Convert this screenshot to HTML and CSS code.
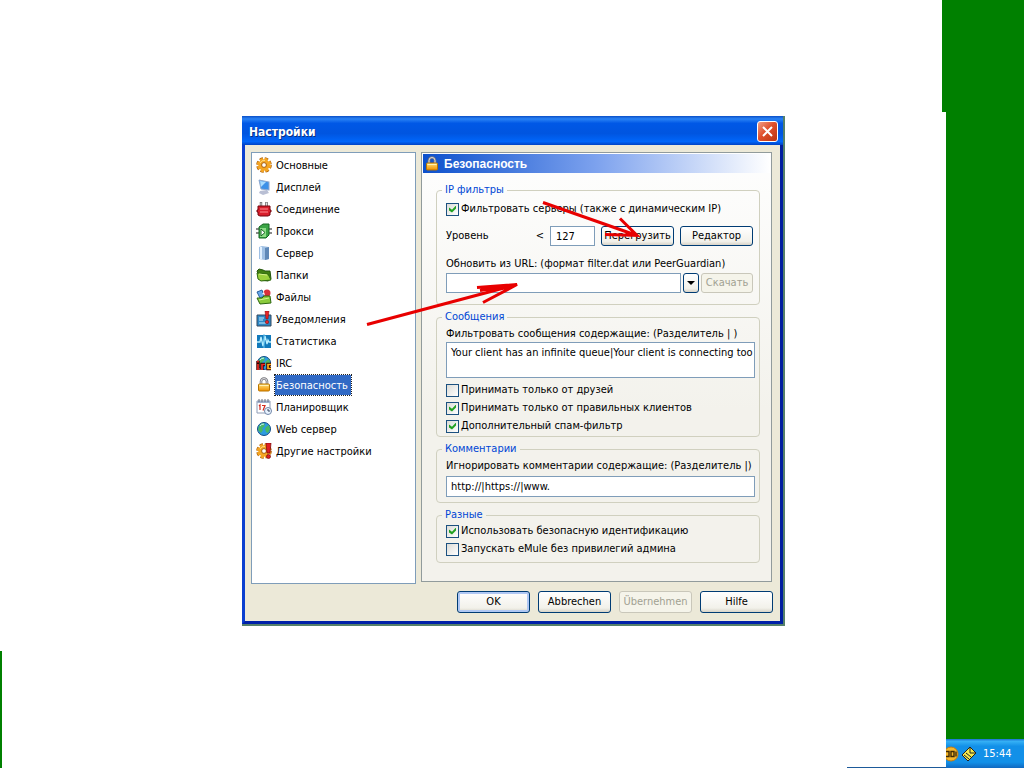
FILE: index.html
```html
<!DOCTYPE html>
<html lang="ru">
  <head>
    <meta charset="UTF-8" />
    <meta name="viewport" content="width=device-width, initial-scale=1.0" />
    <title>Настройки</title>
    <link rel="stylesheet" href="styles.css">
  </head>
  <body>
    <!-- Shared icons -->
    <svg width="0" height="0" class="defs">
      <defs>
        <linearGradient id="gold" x1="0" y1="0" x2="0" y2="1">
          <stop offset="0" stop-color="#ffe27a" />
          <stop offset="1" stop-color="#f09000" />
        </linearGradient>
        <symbol id="lock" viewBox="0 0 16 16">
          <path d="M5 8V4.500a3 3 0 0 1 6 0V8" fill="none" stroke="#77777c" stroke-width="2.600" />
          <path d="M5 8V4.500a3 3 0 0 1 6 0V8" fill="none" stroke="#dedee4" stroke-width="1" />
          <rect x="2.500" y="7" width="11" height="7" rx="1" fill="url(#gold)" stroke="#b87500" />
          <path d="M3.500 8.500h9" stroke="#fff2b5" />
        </symbol>
        <symbol id="gear" viewBox="0 0 16 16">
          <circle cx="8" cy="8" r="6.300" fill="none" stroke="#a85c08" stroke-width="3" stroke-dasharray="3.200 1.750" />
          <circle cx="8" cy="8" r="6" fill="none" stroke="#f5a623" stroke-width="2.400" stroke-dasharray="2.900 1.810" />
          <circle cx="8" cy="8" r="4" fill="none" stroke="#f5a623" stroke-width="3.600" />
          <circle cx="8" cy="8" r="2.400" fill="#fff" stroke="#a85c08" />
          <path d="M4 6a4.500 4.500 0 0 1 5-2.500" fill="none" stroke="#ffdc80" />
        </symbol>
        <symbol id="globe" viewBox="0 0 16 16">
          <circle cx="8" cy="8" r="6.500" fill="#2d9be0" stroke="#124c86" />
          <path d="M3 5l3-3 3 1-1 3-2 1 1 2-2 3-3-3zM10 6l3-2 1 4-2 4-2-1-1-3z" fill="#49b865" />
          <path d="M4 5a5 5 0 0 1 4-2" fill="none" stroke="#c5efff" />
        </symbol>
      </defs>
    </svg>

    <main class="desktop">
      <div class="frame">
        <section class="window">
          <header class="titlebar">
            <h1>Настройки</h1>
            <button type="button" class="close" aria-label="Закрыть">
              <svg viewBox="0 0 19 19"><path d="M5 5l9 9M14 5l-9 9" stroke="#fff" stroke-width="2" /></svg>
            </button>
          </header>

          <div class="content">
            <nav class="menu">
              <a href="#"><svg><use href="#gear" /></svg><span>Основные</span></a>
              <a href="#">
                <svg viewBox="0 0 16 16">
                  <path d="M4 12l7-1 2 3-6 2-4-2z" fill="#b9bfd4" />
                  <path d="M3 1l10 2v8L5 10z" fill="#3d91e8" stroke="#8fa9cf" />
                  <path d="M4 2l6 1-5 5z" fill="#a9dcff" />
                  <path d="M13 3l1-1v9l-1 1z" fill="#c8d2e8" />
                </svg>
                <span>Дисплей</span>
              </a>
              <a href="#">
                <svg viewBox="0 0 16 16">
                  <path d="M5 6V1M10.500 6V1" stroke="#5a5a5a" stroke-width="2.400" />
                  <path d="M5 5V1.500M10.500 5V1.500" stroke="#e2e2e2" />
                  <path d="M2 5h12v4h1v2h-1v3l-2 1H4l-2-1v-3H1V9h1z" fill="#d91f2c" stroke="#75070f" />
                  <path d="M4 8h8M4 11h8" stroke="#ff8d91" />
                </svg>
                <span>Соединение</span>
              </a>
              <a href="#">
                <svg viewBox="0 0 16 16">
                  <path d="M0 6h3M0 10h3M13 6h3M13 10h3" stroke="#666" stroke-width="1.500" />
                  <path d="M3 4l4-3h6v11l-3 3H3z" fill="#3ba545" stroke="#176622" />
                  <path d="M4 5h6v9H4z" fill="#8ddc87" />
                  <path d="M5 6l4 3.500L5 13z" fill="#fff" stroke="#176622" />
                </svg>
                <span>Прокси</span>
              </a>
              <a href="#">
                <svg viewBox="0 0 16 16">
                  <path d="M3 2l3-1 7 1v12l-4 1-6-1z" fill="#9fc0e4" />
                  <path d="M9 3l4-1v12l-4 1z" fill="#5f88b7" />
                  <path d="M5 2v12" stroke="#e0f0ff" stroke-width="2" />
                </svg>
                <span>Сервер</span>
              </a>
              <a href="#">
                <svg viewBox="0 0 16 16">
                  <path d="M1 4l2-2 4 1 2 1h5l1 8-3 2-8-1z" fill="#417f12" stroke="#24560a" />
                  <path d="M1 6l11 1 3 6-10 1-3-2z" fill="#9bd13c" stroke="#2e6810" />
                  <path d="M3 7l8 1" stroke="#d6f28a" />
                </svg>
                <span>Папки</span>
              </a>
              <a href="#">
                <svg viewBox="0 0 16 16">
                  <path d="M1 3l5-2 2 6-4 2z" fill="#67a9eb" stroke="#285f9c" />
                  <circle cx="11" cy="4" r="3.500" fill="#d9303b" />
                  <path d="M6 5l2-2 1 3z" fill="#fff" />
                  <path d="M1 9l5 0 2-2h6l1 7-11 1z" fill="#8acb3c" stroke="#2e6810" />
                  <path d="M3 11l10-2" stroke="#d3f392" />
                </svg>
                <span>Файлы</span>
              </a>
              <a href="#">
                <svg viewBox="0 0 16 16">
                  <path d="M1 4h14v11H1z" fill="#2d88c6" stroke="#34495f" />
                  <path d="M3 7h5M3 9h4M3 12h8" stroke="#c8edff" />
                  <path d="M9 0h4l-1 8h-2z" fill="#e52427" stroke="#7d0809" stroke-width=".5" />
                  <circle cx="11" cy="11" r="1.700" fill="#e52427" stroke="#7d0809" stroke-width=".5" />
                </svg>
                <span>Уведомления</span>
              </a>
              <a href="#">
                <svg viewBox="0 0 16 16">
                  <path d="M1 2h14v13H1z" fill="#127abb" />
                  <path d="M1 9h3l1-5 2 9 2-10 2 8 1-4 1 2h2" fill="none" stroke="#b8f0ff" stroke-width="1.300" />
                  <path d="M8 1v14" stroke="#66c5ef" />
                </svg>
                <span>Статистика</span>
              </a>
              <a href="#">
                <svg viewBox="0 0 16 16">
                  <use href="#globe" />
                  <path d="M2 6v9M6 15V9.500h3M15 9.500h-3v4h3" fill="none" stroke="#300" stroke-width="3.400" />
                  <path d="M2 5.500v2M2 9v6M6 15V9.500h3" fill="none" stroke="#f12c24" stroke-width="1.700" />
                  <path d="M15 9.500h-3v4h3" fill="none" stroke="#ffb21a" stroke-width="1.700" />
                </svg>
                <span>IRC</span>
              </a>
              <a href="#" class="active"><svg><use href="#lock" /></svg><span>Безопасность</span></a>
              <a href="#">
                <svg viewBox="0 0 16 16">
                  <path d="M1 2h13v12H1z" fill="#fff" stroke="#8d9cb6" />
                  <path d="M1 3h13" stroke="#9fb0cc" stroke-width="2" />
                  <path d="M3 0v3M6 0v3M9 0v3M12 0v3" stroke="#666f80" />
                  <path d="M3 7l1-1v5M6 6.500h3l-2 5" fill="none" stroke="#d52a1e" stroke-width="1.200" />
                  <circle cx="12" cy="12" r="3.500" fill="#e9f3ff" stroke="#7186a8" />
                  <path d="M12 10v2h2" fill="none" stroke="#33435c" />
                </svg>
                <span>Планировщик</span>
              </a>
              <a href="#"><svg><use href="#globe" /></svg><span>Web сервер</span></a>
              <a href="#">
                <svg viewBox="0 0 16 16">
                  <use href="#gear" />
                  <path d="M10 0h5l-1 10h-3z" fill="#df1f24" stroke="#750607" stroke-width=".7" />
                  <circle cx="12.500" cy="13.500" r="2" fill="#df1f24" stroke="#750607" stroke-width=".7" />
                </svg>
                <span>Другие настройки</span>
              </a>
            </nav>

            <form class="panel" id="settings">
              <h2><svg><use href="#lock" /></svg>Безопасность</h2>

              <div class="groups">
                <fieldset class="ip-filter">
                  <legend>IP фильтры</legend>
                  <label class="check"><input type="checkbox" checked />Фильтровать серверы (также с динамическим IP)</label>
                  <div class="row level-row">
                    <label for="level">Уровень</label>
                    <span class="less">&lt;</span>
                    <input type="text" id="level" class="level" value="127" />
                    <button type="button" class="btn">Перегрузить</button>
                    <button type="button" class="btn">Редактор</button>
                  </div>
                  <label for="url" class="caption">Обновить из URL: (формат filter.dat или PeerGuardian)</label>
                  <div class="row url-row">
                    <input type="text" id="url" class="url" />
                    <button type="button" class="btn drop" aria-label="Список адресов"></button>
                    <button type="button" class="btn download" disabled>Скачать</button>
                  </div>
                </fieldset>

                <fieldset class="messages">
                  <legend>Сообщения</legend>
                  <label for="msgFilter" class="caption">Фильтровать сообщения содержащие: (Разделитель | )</label>
                  <textarea id="msgFilter" wrap="off">Your client has an infinite queue|Your client is connecting too f</textarea>
                  <label class="check"><input type="checkbox" />Принимать только от друзей</label>
                  <label class="check"><input type="checkbox" checked />Принимать только от правильных клиентов</label>
                  <label class="check"><input type="checkbox" checked />Дополнительный спам-фильтр</label>
                </fieldset>

                <fieldset class="comments">
                  <legend>Комментарии</legend>
                  <label for="commentFilter" class="caption">Игнорировать комментарии содержащие: (Разделитель |)</label>
                  <input type="text" id="commentFilter" value="http://|https://|www." />
                </fieldset>

                <fieldset class="misc">
                  <legend>Разные</legend>
                  <label class="check"><input type="checkbox" checked />Использовать безопасную идентификацию</label>
                  <label class="check"><input type="checkbox" />Запускать eMule без привилегий админа</label>
                </fieldset>
              </div>
            </form>
          </div>

          <footer class="actions">
            <button type="submit" form="settings" class="btn default">OK</button>
            <button type="button" class="btn">Abbrechen</button>
            <button type="button" class="btn" disabled>Übernehmen</button>
            <button type="button" class="btn">Hilfe</button>
          </footer>
        </section>

        <!-- Hand-drawn arrows over the dialog -->
        <svg class="arrows" viewBox="0 0 543 509">
          <path d="M125 208L275 168M235 171l40-3-34 18M238 174l37-6M301 86l94 33M378 102l17 17-32-1" />
        </svg>
      </div>
    </main>

    <aside class="edge">
      <div class="tray">
        <svg class="smiley" viewBox="0 0 13 16">
          <circle cx="5" cy="8" r="7" fill="#f6b72b" stroke="#c27b10" />
          <path d="M0 5.500h3v5H0M5 5.500h3v5H5zM10 5.500v5" fill="none" stroke="#3e2a05" stroke-width="1.400" />
        </svg>
        <svg viewBox="0 0 16 16">
          <path d="M1 9l8-8 6 6-8 8z" fill="#f2e94e" stroke="#222" />
          <path d="M9 2v5h5M3 9l5 4M5 7l5 4" fill="none" stroke="#222" />
        </svg>
        <time>15:44</time>
      </div>
    </aside>
  </body>
</html>
```
FILE: styles.css
```css
:root {
  --green: #008000;
  --face: #ece9d8;
  --field-border: #7f9db9;
  --button-border: #003c74;
  --select: #316ac5;
}

* {
  box-sizing: border-box;
}

body {
  margin: 0;
  min-height: 100vh;
  position: relative;
  background-color: #fff;
  color: #000;
  font: 11px/14px "DejaVu Sans Condensed", "Noto Sans", sans-serif;
}

.defs {
  position: absolute;
}

button,
input,
textarea {
  font: inherit;
  color: inherit;
}

.desktop {
  min-height: 100vh;
  padding: 116px 0 0 3px;
}

.desktop::before,
.desktop::after {
  content: "";
  position: absolute;
  bottom: 0;
}

.desktop::before {
  left: 0;
  width: 2px;
  height: 117px;
  background-color: var(--green);
}

.desktop::after {
  right: 78px;
  width: 99px;
  height: 1px;
  background-color: #1d5a9a;
}

.frame {
  position: relative;
  max-width: 543px;
  margin: 0 auto;
  padding: 0 2px 2px 0;
  background-color: #55806a;
}

.window {
  border: 3px solid #0a3fd0;
  border-top: 0;
  border-right-color: #001ea0;
  border-bottom-color: #0020a8;
  background-color: var(--face);
}

.titlebar {
  display: flex;
  align-items: center;
  justify-content: space-between;
  height: 29px;
  margin: 0 -3px;
  padding: 2px 5px 0 7px;
  background: linear-gradient(#0a4fc8, #2a83f5 10%, #0058e6 25%, #0055e0 60%, #0066fa 88%, #0042c4);
}

.titlebar h1 {
  margin: 0;
  padding-top: 1px;
  color: #fff;
  font: bold 12px/16px "DejaVu Sans Condensed", sans-serif;
  text-shadow: 1px 1px #0a2f80;
}

.close {
  width: 21px;
  height: 21px;
  padding: 0;
  border: 1px solid #fff;
  border-radius: 3px;
  background: linear-gradient(135deg, #f0a088, #e0502c 45%, #b83410);
}

.close svg {
  display: block;
}

.content {
  display: flex;
  gap: 5px;
  padding: 7px 8px 0 6px;
}

.menu {
  flex: 0 0 165px;
  padding: 1px 4px;
  border: 1px solid var(--field-border);
  background-color: #fff;
}

.menu a {
  display: flex;
  align-items: center;
  gap: 3px;
  height: 22px;
  color: inherit;
  text-decoration: none;
}

.menu svg {
  width: 16px;
  height: 16px;
}

.menu span {
  padding: 4px 3px 2px 1px;
}

.menu .active span {
  background-color: var(--select);
  color: #fff;
  outline: 1px dotted #222;
}

.panel {
  flex: 1;
  min-width: 0;
  margin-bottom: 2px;
  padding: 1px 1px 18px;
  border: 1px solid #919b9c;
  background: linear-gradient(#fefefe, #f3f2ec 60%);
}

.panel h2 {
  display: flex;
  align-items: center;
  gap: 4px;
  height: 19px;
  margin: 0;
  padding-left: 1px;
  color: #fff;
  background: linear-gradient(to right, #0c50cc, #7da2ee 50%, #fff);
  font: bold 12px/16px "Liberation Sans", sans-serif;
}

.panel h2 svg {
  width: 16px;
  height: 16px;
}

.groups {
  display: flex;
  flex-direction: column;
  gap: 5px;
  padding: 10px 10px 0 13px;
}

fieldset {
  display: flex;
  flex-direction: column;
  min-width: 0;
  margin: 0;
  padding: 0 4px 0 9px;
  border: 1px solid #d0d0bf;
  border-radius: 4px;
}

legend {
  margin-left: -4px;
  padding: 0 3px;
  color: #0046d5;
}

.ip-filter {
  padding-right: 6px;
  padding-bottom: 11px;
}

.messages {
  padding-bottom: 1px;
}

.comments {
  padding-bottom: 5px;
}

.misc {
  padding-bottom: 4px;
}

.caption {
  margin-top: 3px;
}

.check {
  display: flex;
  align-items: center;
  gap: 2px;
  height: 18px;
}

.ip-filter .check {
  margin-top: 3px;
}

.check input {
  appearance: none;
  width: 13px;
  height: 13px;
  margin: 0;
  border: 1px solid #1c5180;
  background: linear-gradient(135deg, #dcdcd7, #fff);
}

.check input:checked::before {
  content: "";
  display: block;
  width: 7px;
  height: 7px;
  margin: 2px;
  background-color: #21a121;
  clip-path: polygon(0 29%, 43% 62%, 100% 0, 100% 43%, 43% 100%, 0 71%);
}

.row {
  display: flex;
  align-items: center;
}

.level-row {
  gap: 6px;
  height: 20px;
  margin: 8px 0;
}

.less {
  margin-left: auto;
}

input[type="text"],
textarea {
  height: 20px;
  margin: 0;
  padding: 0 4px;
  border: 1px solid var(--field-border);
  border-radius: 0;
  background-color: #fff;
}

.row .level {
  width: 45px;
  padding: 0 5px;
}

.url-row {
  gap: 2px;
  margin-top: 2px;
}

.row .url {
  flex: 1;
  min-width: 0;
}

textarea {
  height: 36px;
  margin: 1px 0 3px;
  padding: 3px 4px;
  overflow: hidden;
  resize: none;
}

.comments input[type="text"] {
  height: 21px;
  margin-top: 3px;
}

.btn {
  width: 73px;
  height: 20px;
  padding: 0;
  border: 1px solid var(--button-border);
  border-radius: 3px;
  background: linear-gradient(#fff, #f2f1ea 80%, #d8d3c8);
  white-space: nowrap;
}

.btn:disabled {
  border-color: #c9c7ba;
  background: #f5f4ea;
  color: #a1a192;
}

.drop {
  width: 16px;
}

.drop::before {
  content: "";
  display: block;
  margin: 0 auto;
  width: 8px;
  height: 4px;
  background-color: #000;
  clip-path: polygon(0 0, 100% 0, 50% 100%);
}

.download {
  width: 52px;
}

.actions {
  display: flex;
  justify-content: flex-end;
  gap: 8px;
  padding: 7px 7px 8px;
}

.actions .btn {
  height: 22px;
}

.default {
  box-shadow: inset 0 0 0 2px #b0c8f4;
}

.arrows {
  position: absolute;
  inset: 0;
  width: 100%;
  height: 100%;
  pointer-events: none;
  fill: none;
  stroke: #e80000;
  stroke-width: 3;
}

.edge {
  position: absolute;
  top: 0;
  right: 0;
  bottom: 0;
  display: flex;
  align-items: flex-end;
  width: 78px;
  background-color: var(--green);
}

.edge::before {
  content: "";
  position: absolute;
  top: 0;
  right: 100%;
  width: 4px;
  height: 112px;
  background-color: var(--green);
}

.tray {
  display: flex;
  align-items: center;
  gap: 2px;
  width: 100%;
  height: 29px;
  color: #fff;
  background: linear-gradient(#1a6fd0, #35b0f5 8%, #1290e8 25%, #1290e8 80%, #1068c0);
}

.tray svg {
  width: 16px;
  height: 16px;
}

.tray .smiley {
  width: 13px;
}

.tray time {
  margin-left: 4px;
}
```
